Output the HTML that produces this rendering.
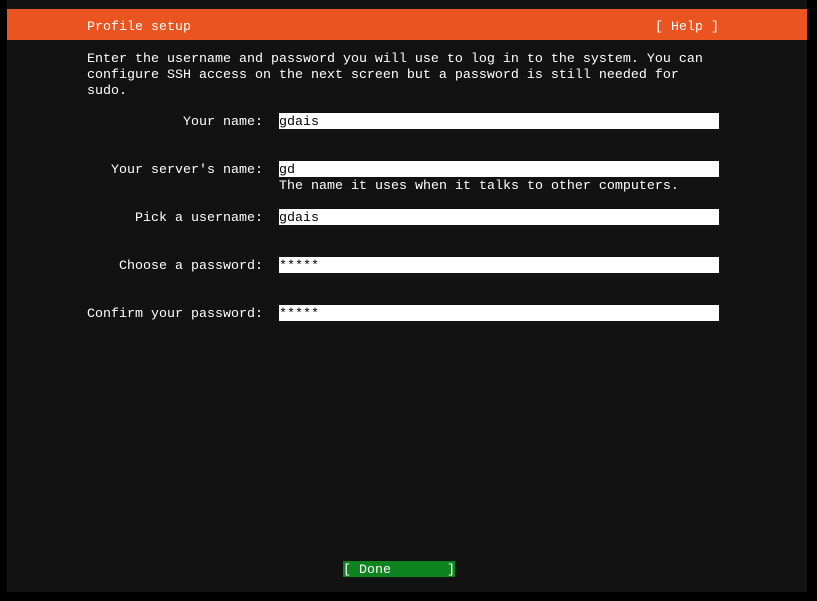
<!DOCTYPE html>
<html><head><style>
body{margin:0;width:817px;height:601px;background:#000;overflow:hidden;font-family:"Liberation Mono","DejaVu Sans Mono",monospace;font-size:13.33px;color:#fff}
#s{position:absolute;left:7px;top:0;width:800px;height:592px;background:#121212}
#bar{position:absolute;left:7px;top:9px;width:800px;height:31px;background:#e95420}
.t{position:absolute;height:16px;line-height:20px;white-space:pre}
.f{position:absolute;left:279px;width:440px;height:16px;line-height:20px;background:#fff;color:#000;white-space:pre}
#done{position:absolute;left:343px;top:561px;width:112px;height:16px;line-height:20px;background:#0e8420;white-space:pre}
</style></head><body>
<div id="s"></div><div id="bar"></div>
<div class="t" style="left:87px;top:18px">Profile setup</div>
<div class="t" style="left:655px;top:18px">[ Help ]</div>
<div class="t" style="left:87px;top:50px">Enter the username and password you will use to log in to the system. You can</div>
<div class="t" style="left:87px;top:66px">configure SSH access on the next screen but a password is still needed for</div>
<div class="t" style="left:87px;top:82px">sudo.</div>
<div class="t" style="left:183px;top:113px">Your name:</div><div class="f" style="top:113px">gdais</div>
<div class="t" style="left:111px;top:161px">Your server's name:</div><div class="f" style="top:161px">gd</div>
<div class="t" style="left:279px;top:177px">The name it uses when it talks to other computers.</div>
<div class="t" style="left:135px;top:209px">Pick a username:</div><div class="f" style="top:209px">gdais</div>
<div class="t" style="left:119px;top:257px">Choose a password:</div><div class="f" style="top:257px">*****</div>
<div class="t" style="left:87px;top:305px">Confirm your password:</div><div class="f" style="top:305px">*****</div>
<div id="done">[ Done       ]</div>
</body></html>
